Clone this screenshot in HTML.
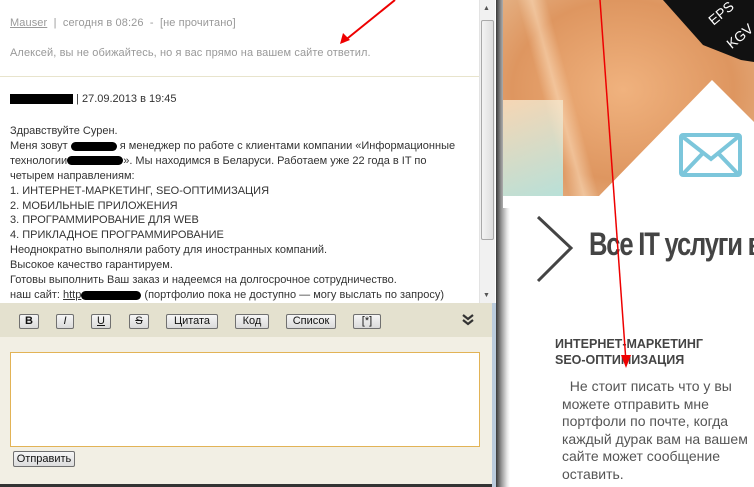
<!DOCTYPE html>
<html><head><meta charset="utf-8">
<style>
*{margin:0;padding:0;box-sizing:border-box}
body{width:754px;height:487px;overflow:hidden;background:#fff;font-family:Tahoma,"Liberation Sans","DejaVu Sans",sans-serif;position:relative}
#left{position:absolute;left:0;top:0;width:496px;height:487px;background:#fff}
.t{position:absolute;left:10px;font-size:11px;color:#333;white-space:nowrap;letter-spacing:0px}
.g{color:#999}
.blk{display:inline-block;background:#000;height:9px;border-radius:5px;vertical-align:middle}
#sb{position:absolute;left:479px;top:0;width:16px;height:303px;background:#f1f1f1;border-left:1px solid #e3e3e3}
#thumb{position:absolute;left:481px;top:20px;width:13px;height:220px;background:linear-gradient(90deg,#f3f3f3,#dedede);border:1px solid #a9a9a9;border-radius:2px}
#tb{position:absolute;left:0;top:303px;width:496px;height:34px;background:#e4e1cf}
.btn{position:absolute;top:314px;height:15px;border:1px solid #707070;border-radius:2px;background:linear-gradient(#f6f6f6,#dadada);font-size:11px;line-height:13px;text-align:center;color:#111}
#bot{position:absolute;left:0;top:337px;width:496px;height:148px;background:#f2efe4}
#ta{position:absolute;left:10px;top:352px;width:470px;height:95px;background:#fff;border:1px solid #e2b356}
#send{position:absolute;left:13px;top:451px;width:62px;height:16px;border:1px solid #707070;border-radius:2px;background:linear-gradient(#f6f6f6,#dcdcdc);font-size:11px;line-height:14px;text-align:center;color:#111}
#right{position:absolute;left:496px;top:0;width:258px;height:487px;background:#fff}
</style></head><body>
<div id="left">
<div class="t g" style="top:17px;letter-spacing:0.1px"><span style="text-decoration:underline">Mauser</span> &nbsp;| &nbsp;сегодня в 08:26 &nbsp;- &nbsp;[не прочитано]</div>
<div class="t g" style="top:47px;letter-spacing:0.1px">Алексей, вы не обижайтесь, но я вас прямо на вашем сайте ответил.</div>
<div style="position:absolute;left:0;top:76px;width:479px;height:1px;background:#e8e4cc"></div>
<div class="t" style="top:93px"><span class="blk" style="width:63px;border-radius:0;height:10px"></span> | 27.09.2013 в 19:45</div>
<div class="t" style="top:124px;line-height:14.9px">Здравствуйте Сурен.<br>
Меня зовут <span class="blk" style="width:46px"></span> я менеджер по работе с клиентами компании «Информационные<br>
технологии<span class="blk" style="width:56px"></span>». Мы находимся в Беларуси. Работаем уже 22 года в IT по<br>
четырем направлениям:<br>
1. ИНТЕРНЕТ-МАРКЕТИНГ, SEO-ОПТИМИЗАЦИЯ<br>
2. МОБИЛЬНЫЕ ПРИЛОЖЕНИЯ<br>
3. ПРОГРАММИРОВАНИЕ ДЛЯ WEB<br>
4. ПРИКЛАДНОЕ ПРОГРАММИРОВАНИЕ<br>
Неоднократно выполняли работу для иностранных компаний.<br>
Высокое качество гарантируем.<br>
Готовы выполнить Ваш заказ и надеемся на долгосрочное сотрудничество.<br>
наш сайт: <span style="text-decoration:underline">http<span class="blk" style="width:60px"></span></span> (портфолио пока не доступно — могу выслать по запросу)</div>
<div id="sb"></div><div id="thumb"></div>
<div style="position:absolute;left:483px;top:5px;font-size:7px;color:#555">▲</div>
<div style="position:absolute;left:483px;top:292px;font-size:7px;color:#555">▼</div>
<div id="tb"></div>
<div class="btn" style="left:19px;width:20px;font-weight:bold">B</div>
<div class="btn" style="left:56px;width:18px;font-style:italic">I</div>
<div class="btn" style="left:91px;width:20px;text-decoration:underline">U</div>
<div class="btn" style="left:129px;width:20px;text-decoration:line-through">S</div>
<div class="btn" style="left:166px;width:52px">Цитата</div>
<div class="btn" style="left:235px;width:34px">Код</div>
<div class="btn" style="left:286px;width:50px">Список</div>
<div class="btn" style="left:353px;width:28px">[*]</div>
<svg style="position:absolute;left:462px;top:314px" width="12" height="12"><path d="M1 1 L6 5 L11 1 M1 6 L6 10 L11 6" fill="none" stroke="#333" stroke-width="2.2"/></svg>
<div id="bot"></div>
<div id="ta"></div>
<div id="send">Отправить</div>
<div style="position:absolute;left:0;top:484px;width:496px;height:3px;background:#333"></div>
<div style="position:absolute;left:492px;top:303px;width:4px;height:184px;background:#bcd"></div>
</div>
<div id="right">
<div style="position:absolute;left:0;top:0;width:14px;height:487px;background:linear-gradient(90deg,#3a3a3a,#999 40%,#e8e8e8 80%,#fff)"></div>
<div style="position:absolute;left:7px;top:0;width:251px;height:196px;background:radial-gradient(ellipse at 120px 90px,#f0b27e,#de9660 60%,#e6b98f);overflow:hidden">
<div style="position:absolute;left:0;top:100px;width:60px;height:96px;background:linear-gradient(160deg,#f6d6b4,#b8e0d8)"></div>
<div style="position:absolute;left:40px;top:0;width:30px;height:196px;background:linear-gradient(90deg,transparent,rgba(255,230,200,.5),transparent);transform:skewX(15deg)"></div>
<svg style="position:absolute;left:0;top:0" width="251" height="196"><polygon points="160,0 251,0 251,62 238,60 200,45" fill="#111"/></svg>
<div style="position:absolute;left:204px;top:5px;color:#fff;font-size:14px;transform:rotate(-40deg);font-family:'Liberation Sans',sans-serif">EPS</div>
<div style="position:absolute;left:222px;top:28px;color:#fff;font-size:14px;transform:rotate(-40deg);font-family:'Liberation Sans',sans-serif">KGV</div>
</div>
<svg style="position:absolute;left:7px;top:78px" width="251" height="130"><polygon points="96,118 209,2 251,44 251,130 96,130" fill="#fff"/><polygon points="0,118 251,118 251,130 0,130" fill="#fff"/></svg>
<svg style="position:absolute;left:183px;top:133px" width="64" height="45"><rect x="2" y="2" width="59" height="40" rx="2" fill="none" stroke="#7cc6db" stroke-width="4"/><path d="M4 4 L32 26 L59 4 M4 41 L24 20 M59 41 L39 20" fill="none" stroke="#7cc6db" stroke-width="4"/></svg>
<svg style="position:absolute;left:40px;top:215px" width="40" height="70"><path d="M2 2 L35 33 L2 66" fill="none" stroke="#444" stroke-width="3"/></svg>
<div style="position:absolute;left:93px;top:226px;font-size:32px;font-weight:bold;color:#444;white-space:nowrap;letter-spacing:-1.5px;font-family:'Liberation Sans Narrow','Liberation Sans',sans-serif;transform:scaleX(.8);transform-origin:0 0">Все IT услуги в</div>
<div style="position:absolute;left:59px;top:336px;font-size:12.5px;font-weight:bold;color:#444;line-height:16px;font-family:'Liberation Sans',sans-serif">ИНТЕРНЕТ-МАРКЕТИНГ<br>SEO-ОПТИМИЗАЦИЯ</div>
<div style="position:absolute;left:66px;top:378px;font-size:14px;color:#555;line-height:17.6px;font-family:'Liberation Sans',sans-serif;white-space:nowrap">&nbsp;&nbsp;Не стоит писать что у вы<br>можете отправить мне<br>портфоли по почте, когда<br>каждый дурак вам на вашем<br>сайте может сообщение<br>оставить.</div>
</div>
<svg style="position:absolute;left:0;top:0" width="754" height="487"><line x1="395" y1="0" x2="343" y2="42" stroke="#e00" stroke-width="2"/><path d="M340 44 L343 33 L350 40 Z" fill="#e00"/><line x1="600" y1="0" x2="626" y2="362" stroke="#e00" stroke-width="1.5"/><path d="M626 368 L621 355 L631 355 Z" fill="#e00"/></svg>
</body></html>
